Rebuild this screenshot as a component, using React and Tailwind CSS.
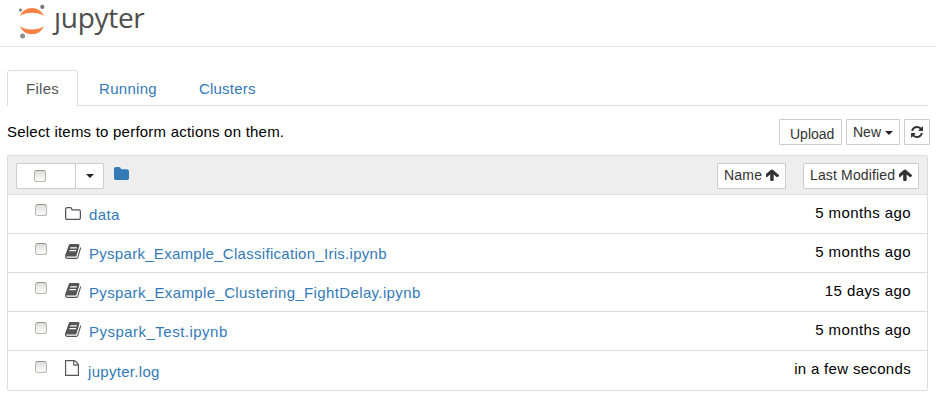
const PATHS = {
  arrowUp:
    "M1611 971q0 51-37 90l-75 75q-38 38-91 38-54 0-90-38l-294-293v704q0 52-37.5 84.5t-90.5 32.5h-128q-53 0-90.5-32.5t-37.5-84.5v-704l-294 293q-36 38-90 38t-90-38l-75-75q-38-38-38-90 0-53 38-91l651-651q35-37 90-37 54 0 91 37l651 651q37 39 37 91z",
  folder:
    "M1728 608v704q0 92-66 158t-158 66h-1216q-92 0-158-66t-66-158v-960q0-92 66-158t158-66h320q92 0 158 66t66 158v32h672q92 0 158 66t66 158z",
  folderOpen:
    "M1600 1312v-704q0-40-28-68t-68-28h-704q-40 0-68-28t-28-68v-64q0-40-28-68t-68-28h-320q-40 0-68 28t-28 68v960q0 40 28 68t68 28h1216q40 0 68-28t28-68zm128-704v704q0 92-66 158t-158 66h-1216q-92 0-158-66t-66-158v-960q0-92 66-158t158-66h320q92 0 158 66t66 158v32h672q92 0 158 66t66 158z",
  file:
    "M1596 380q28 28 48 76t20 88v1152q0 40-28 68t-68 28h-1344q-40 0-68-28t-28-68v-1600q0-40 28-68t68-28h896q40 0 88 20t76 48zm-444-244v376h376q-10-29-22-41l-313-313q-12-12-41-22zm384 1528v-1024h-416q-40 0-68-28t-28-68v-416h-768v1536h1280z",
  book:
    "M1703 478q40 57 18 129l-275 906q-19 64-76.5 107.5t-122.5 43.5h-923q-77 0-148.5-53.5t-99.5-131.5q-24-67-2-127 0-4 3-27t4-37q1-8-3-21.5t-3-19.5q2-11 8-21t16.5-23.5 16.5-23.5q23-38 45-91.5t30-91.5q3-10 .5-30t-.5-28q3-11 17-28t17-23q21-36 42-92t25-90q1-9-2.5-32t.5-28q4-13 22-30.5t22-22.5q19-26 42.5-84.5t27.5-96.5q1-8-3-25.5t-2-26.5q2-8 9-18t18-23 17-21q8-12 16.5-30.5t15-35 16-36 19.5-32 26.5-23.5 36-11.5 47.5 5.5l-1 3q38-9 51-9h761q74 0 114 56t18 130l-274 906q-36 119-71.5 153.5t-128.5 34.5h-869q-27 0-38 15-11 16-1 43 24 70 144 70h923q29 0 56-15.5t35-41.5l300-987q7-22 5-57 38 15 59 43zm-1074-20l-36 126h680l36-126zm-83 278l-36 126h680l36-126z",
  refresh:
    "M1639 1056q0 5-1 7-64 268-268 434.5t-478 166.5q-146 0-282.5-55t-243.5-157l-129 129q-19 19-45 19t-45-19-19-45v-448q0-26 19-45t45-19h448q26 0 45 19t19 45-19 45l-137 137q71 66 161 102t187 36q134 0 250-65t186-179q11-17 53-117 8-23 30-23h192q13 0 22.5 9.5t9.5 22.5zm25-800v448q0 26-19 45t-45 19h-448q-26 0-45-19t-19-45 19-45l138-138q-148-137-349-137-134 0-250 65t-186 179q-11 17-53 117-8 23-30 23h-199q-13 0-22.5-9.5t-9.5-22.5v-7q65-268 270-434.5t480-166.5q146 0 284 55.5t245 156.5l130-129q19-19 45-19t45 19 19 45z",
};

// Each icon is cropped to its own ink box.
const BOXES = {
  arrowUp: "181 139 1430 1525",
  folder: "64 128 1664 1408",
  folderOpen: "64 128 1664 1408",
  file: "128 0 1536 1792",
  book: "64 128 1664 1536",
  refresh: "128 128 1536 1536",
};

function Icon({ name, className }) {
  return (
    <svg viewBox={BOXES[name]} preserveAspectRatio="none" fill="currentColor" className={`shrink-0 ${className}`}>
      <path d={PATHS[name]} fillRule={name === "book" ? "evenodd" : "nonzero"} />
    </svg>
  );
}

function Checkbox({ className = "" }) {
  return (
    <span
      role="checkbox"
      aria-checked="false"
      className={`block size-3 shrink-0 rounded-[3px] border border-[#b4b7ae] border-t-[#92968a] bg-linear-to-b from-[#dcdcdc] to-white ${className}`}
    />
  );
}

function Caret({ className = "" }) {
  return <span className={`block h-0 w-0 border-x-4 border-t-4 border-x-transparent border-t-[#222] ${className}`} />;
}

function Logo() {
  return (
    <div className="flex pl-[18px] text-[#4e4e4e]">
      <svg viewBox="0 0 28 36" className="mt-1 h-9 w-7 shrink-0">
        <path d="M2 12C4 7 8.500 4 13.900 4s9.900 3 11.900 8C22.500 9.700 18.500 8.700 13.900 8.700S5.300 9.700 2 12z" fill="#f98045" />
        <path d="M2 22.200c2 5 6.500 8 11.900 8s9.900-3 11.900-8c-3.300 2.300-7.300 3.300-11.900 3.300s-8.600-1-11.900-3.300z" fill="#f98045" />
        <circle cx="2.500" cy="5.900" r="1.500" fill="#767677" />
        <circle cx="24.300" cy="2.900" r="2.100" fill="#767677" />
        <circle cx="4.600" cy="31.900" r="2.500" fill="#8f8f8f" />
      </svg>
      {/* The wordmark's j carries no dot, so a white block hides it. */}
      <div className="relative ml-[8px] font-['Open_Sans',sans-serif] text-[28px] leading-[35px] tracking-[-0.3px]">
        jupyter
        <span className="absolute left-0 top-[3px] h-[9px] w-[7px] bg-white" />
      </div>
    </div>
  );
}

const FILES = [
  { name: "data", date: "5 months ago", icon: "folderOpen", tracking: "tracking-[0.4px]", dateTracking: "tracking-[0.4px]" },
  { name: "Pyspark_Example_Classification_Iris.ipynb", date: "5 months ago", icon: "book", tracking: "tracking-[0.29px]", dateTracking: "tracking-[0.4px]" },
  { name: "Pyspark_Example_Clustering_FightDelay.ipynb", date: "15 days ago", icon: "book", tracking: "tracking-[0.37px]", dateTracking: "tracking-[0.4px]" },
  { name: "Pyspark_Test.ipynb", date: "5 months ago", icon: "book", tracking: "tracking-[0.48px]", dateTracking: "tracking-[0.4px]" },
  { name: "jupyter.log", date: "in a few seconds", icon: "file", tracking: "tracking-[0.3px]", dateTracking: "tracking-[0.32px]" },
];

const ICON_CLASSES = {
  folderOpen: "mt-3 h-[13px] w-4",
  book: "mt-[10px] h-[15px] w-4",
  file: "mt-[9px] h-4 w-[14px]",
};

function FileRow({ file, index, last }) {
  return (
    <li className={`flex items-start border-t border-[#ddd] pl-[27px] pr-4 ${last ? "h-10" : "h-[39px]"}`}>
      <Checkbox className={index >= 3 ? "mt-[10px]" : "mt-[9px]"} />
      <span className="ml-[18px] w-6 shrink-0 text-[#555]">
        <Icon name={file.icon} className={`block ${ICON_CLASSES[file.icon]}`} />
      </span>
      <a className={`whitespace-nowrap text-[#337ab7] ${last ? "-ml-px pt-[11px]" : "pt-[10px]"} ${file.tracking}`}>{file.name}</a>
      <span className={`ml-auto whitespace-nowrap pt-2 ${file.dateTracking}`}>{file.date}</span>
    </li>
  );
}

export default function App() {
  return (
    <div className="h-[414px] w-[936px] overflow-hidden bg-white font-['Liberation_Sans',Arial,sans-serif] text-[15px] leading-5 text-black">
      <header className="h-[47px] border-b border-[#e7e7e7]">
        <Logo />
      </header>

      <nav className="ml-[7px] mt-[23px] flex h-9 w-[921px] items-end border-b border-[#ddd] tracking-[0.3px] text-[#337ab7]">
        <a className="-mb-px h-9 w-[71px] rounded-t-[3px] border border-b-0 border-[#ddd] bg-white pl-[18px] pt-[8px] text-[#555]">Files</a>
        <a className="ml-[21px] h-9 w-[79px] pt-[10px]">Running</a>
        <a className="ml-[21px] h-9 pt-[10px] tracking-[0.2px]">Clusters</a>
      </nav>

      <div className="ml-[7px] mr-[6px] mt-[13px] flex h-[26px] items-start">
        <p className="pt-[3px] tracking-[0.22px]">Select items to perform actions on them.</p>
        <div className="ml-auto flex gap-1 text-sm leading-5 text-[#333]">
          <button className="h-[26px] w-[63px] rounded-[1px] border border-[#ccc] pl-[10px] pt-1 text-left">Upload</button>
          <button className="flex h-[26px] w-[54px] items-start rounded-[1px] border border-[#ccc] pl-[6px] pt-0.5">
            New
            <Caret className="ml-1 mt-[9px]" />
          </button>
          <button className="flex h-[26px] w-[26px] items-center justify-center rounded-[1px] border border-[#ccc]">
            <Icon name="refresh" className="h-3 w-3" />
          </button>
        </div>
      </div>

      <section className="ml-[7px] mt-[10px] w-[921px] rounded-[2px] border border-[#ddd]">
        <div className="flex h-[38px] items-start bg-[#eee] pl-2 pr-2 pt-[7px] text-sm leading-5 text-[#333]">
          <div className="flex h-[26px] w-[88px] rounded-[1px] border border-[#ccc] bg-white">
            <div className="w-[59px] border-r border-[#ccc] pl-[17px] pt-[6px]">
              <Checkbox />
            </div>
            <Caret className="ml-[10px] mt-[10px]" />
          </div>
          <Icon name="folder" className="ml-[10px] mt-[4px] h-[13px] w-[15px] text-[#337ab7]" />
          <button className="ml-auto flex h-[26px] w-[69px] rounded-[1px] border border-[#ccc] bg-white pl-[6px] pt-px tracking-[0.2px]">
            Name
            <Icon name="arrowUp" className="ml-1 mt-1 h-3 w-[13px]" />
          </button>
          <button className="ml-[17px] flex h-[26px] w-[116px] rounded-[1px] border border-[#ccc] bg-white pl-[6px] pt-px tracking-[0.15px]">
            Last Modified
            <Icon name="arrowUp" className="ml-1 mt-1 h-3 w-[13px]" />
          </button>
        </div>
        <ul>
          {FILES.map((file, i) => (
            <FileRow key={file.name} file={file} index={i} last={i === FILES.length - 1} />
          ))}
        </ul>
      </section>
    </div>
  );
}
